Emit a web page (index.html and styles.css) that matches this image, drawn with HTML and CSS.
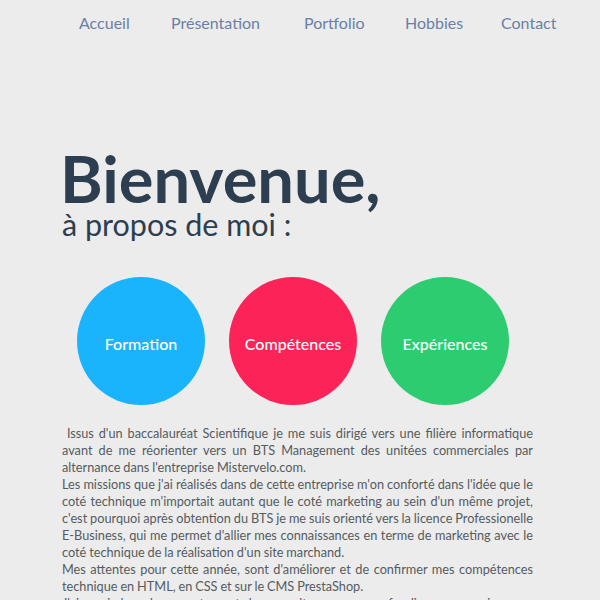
FILE: index.html
```html
<!DOCTYPE html>
<html lang="fr">
<head>
<meta charset="utf-8">
<title>Bienvenue</title>
<link rel="stylesheet" href="styles.css">
</head>
<body>
<nav class="nav">
  <a href="#">Accueil</a>
  <a href="#">Présentation</a>
  <a href="#">Portfolio</a>
  <a href="#">Hobbies</a>
  <a href="#">Contact</a>
</nav>
<main class="main">
  <h1 class="title">Bienvenue,</h1>
  <h2 class="subtitle">à propos de moi :</h2>
  <div class="circles">
    <div class="circle blue">Formation</div>
    <div class="circle red">Compétences</div>
    <div class="circle green">Expériences</div>
  </div>
  <p class="text">&nbsp;Issus d'un baccalauréat Scientifique je me suis dirigé vers une filière informatique avant de me réorienter vers un BTS Management des unitées commerciales par alternance dans l'entreprise Mistervelo.com.<br>Les missions que j'ai réalisés dans de cette entreprise m'on conforté dans l'idée que le coté technique m'importait autant que le coté marketing au sein d'un même projet, c'est pourquoi après obtention du BTS je me suis orienté vers la licence Professionelle E-Business, qui me permet d'allier mes connaissances en terme de marketing avec le coté technique de la réalisation d'un site marchand.<br>Mes attentes pour cette année, sont d'améliorer et de confirmer mes compétences technique en HTML, en CSS et sur le CMS PrestaShop.<br>J'aimerais lors de mon stage et de mon alternance approfondir mes connaissances techniques et marketing.</p>
</main>
</body>
</html>
```
FILE: styles.css
```css
html, body {
  margin: 0;
  padding: 0;
  background: #ececec;
  font-family: Lato, "Open Sans", sans-serif;
}
.nav {
  display: flex;
  padding: 12px 0 0 79px;
}
.nav a {
  color: #6a80a4;
  text-decoration: none;
  font-size: 16px;
  line-height: 21px;
}
.nav a:nth-child(1) { width: 92px; }
.nav a:nth-child(2) { width: 133px; }
.nav a:nth-child(3) { width: 101px; }
.nav a:nth-child(4) { width: 96px; }
.main {
  padding: 0 67px 0 62px;
}
.title {
  margin: 112px 0 0 -2px;
  font-size: 65px;
  font-weight: 700;
  color: #2c3e50;
  line-height: 66px;
}
.subtitle {
  margin: -5px 0 0 0;
  font-size: 30.5px;
  font-weight: 400;
  color: #2c3e50;
  line-height: 36px;
}
.circles {
  display: flex;
  gap: 24px;
  margin: 35px 0 0 15px;
}
.circle {
  width: 128px;
  height: 128px;
  border-radius: 50%;
  display: flex;
  align-items: center;
  justify-content: center;
  color: #fff;
  font-size: 16px;
  font-weight: 500;
  padding-top: 4px;
  box-sizing: border-box;
}
.blue { background: #1ab4fd; }
.red { background: #fb2358; }
.green { background: #2ecc71; }
.text {
  margin: 20px 0 0 0;
  font-size: 12.72px;
  word-spacing: -0.35px;
  line-height: 17px;
  color: #555b5f;
  text-align: justify;
}
```
